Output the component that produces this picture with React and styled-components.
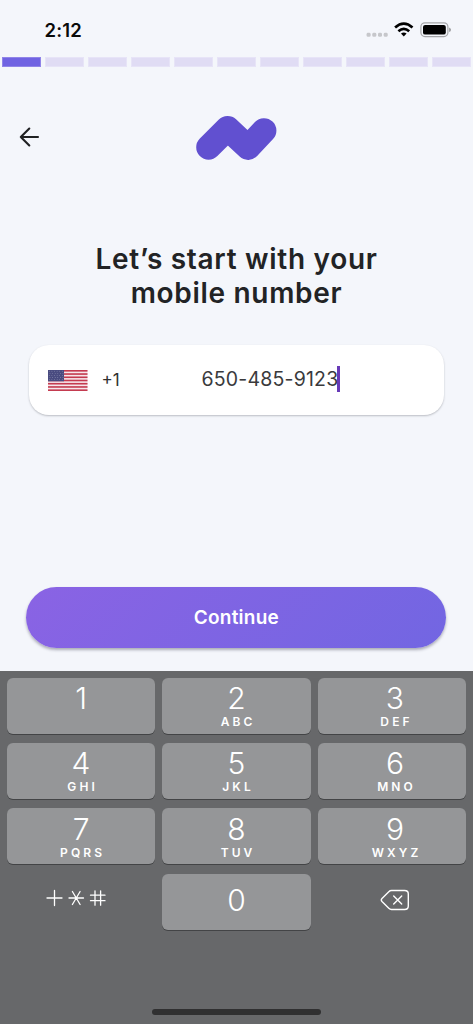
import React from "react";
import styled, { createGlobalStyle } from "styled-components";

const GlobalStyle = createGlobalStyle`
  * { box-sizing: border-box; }
  body { margin: 0; background: #f4f6fb; }
  button { border: 0; padding: 0; font: inherit; background: none; }
`;

const Screen = styled.main`
  width: 473px;
  height: 1024px;
  display: flex;
  flex-direction: column;
  overflow: hidden;
  background: #f4f6fb;
  color: #212224;
  font-family: Inter, "Liberation Sans", sans-serif;
`;

const StatusBar = styled.header`
  height: 57px;
  flex: none;
  display: flex;
  justify-content: space-between;
  padding: 19px 20px 0 44.5px;
`;

const Time = styled.span`
  font-size: 18.5px;
  line-height: 22px;
  font-weight: 600;
  letter-spacing: 0.2px;
  color: #0a0a0a;
`;

const StatusIcons = styled.svg`
  width: 88px;
  height: 22px;
`;

const Progress = styled.div`
  display: grid;
  grid-template-columns: repeat(11, 1fr);
  gap: 4.2px;
  padding: 0 2px;
  height: 10px;
  flex: none;
`;

const Step = styled.span`
  background: ${(p) => (p.$active ? "#7063e2" : "#e0dcf4")};
  border: 1px solid ${(p) => (p.$active ? "#9084e8" : "#e7e4f7")};
`;

const NavBar = styled.nav`
  display: grid;
  grid-template-columns: 1fr 82px 1fr;
  align-items: center;
  height: 46px;
  margin-top: 48px;
  padding: 0 19px 0 18px;
  flex: none;
`;

const BackIcon = styled.svg`
  display: block;
  width: 22px;
  height: 22px;
  margin-bottom: 2px;
`;

const Logo = styled.svg`
  display: block;
  width: 82px;
  height: 46px;
`;

const Title = styled.h1`
  margin: 81px 0 0;
  text-align: center;
  font-weight: 600;
  font-size: 28px;
  line-height: 34px;
  letter-spacing: 0.7px;
  color: #222325;
`;

const PhoneField = styled.div`
  display: flex;
  align-items: center;
  flex: none;
  height: 70px;
  margin: 35px 29px 0;
  padding-left: 19px;
  border-radius: 20px;
  background: #fff;
  box-shadow: 0 1px 2px rgba(40, 42, 55, 0.28);
`;

const Flag = styled.svg`
  display: block;
  width: 40px;
  height: 21px;
`;

const DialCode = styled.span`
  width: 100px;
  margin-left: 13.4px;
  font-size: 17px;
  color: #303030;
`;

const PhoneNumber = styled.span`
  font-size: 19.5px;
  line-height: 25px;
  letter-spacing: 0.2px;
  color: #3a3a3c;
  margin-top: -2px;
`;

const Caret = styled.span`
  width: 3px;
  height: 26px;
  margin: -2px 0 0 -1.2px;
  background: #673ab7;
`;

const ContinueButton = styled.button`
  flex: none;
  width: 420px;
  height: 61px;
  margin: 172px 0 0 26.4px;
  border-radius: 31px;
  background: linear-gradient(135deg, #8a63e4, #7266e2);
  box-shadow: 0 2px 3px rgba(40, 40, 60, 0.36);
  color: #fff;
  font-size: 19px;
  font-weight: 600;
  letter-spacing: 0.25px;
`;

const Keyboard = styled.section`
  flex: 1;
  margin-top: 23px;
  padding: 7px 7px 9px;
  display: flex;
  flex-direction: column;
  justify-content: space-between;
  align-items: center;
  background: #67686a;
`;

const Keys = styled.div`
  width: 100%;
  display: grid;
  grid-template-columns: repeat(3, 1fr);
  grid-auto-rows: 56px;
  gap: 9.2px 7.4px;
`;

const Key = styled.button`
  display: flex;
  flex-direction: column;
  align-items: center;
  justify-content: ${(p) => (p.$centered ? "center" : "flex-start")};
  padding-top: ${(p) => (p.$centered ? 0 : "3px")};
  padding-bottom: ${(p) => (p.$centered ? "3px" : 0)};
  border-radius: 6px;
  color: #fff;
  background: ${(p) => (p.$plain ? "none" : "#959698")};
  box-shadow: ${(p) => (p.$plain ? "none" : "0 1px 0.5px #434446")};

  &:nth-child(3n) {
    padding-left: 6px;
  }

  &:nth-child(n + 7):nth-child(-n + 9) {
    padding-top: 4px;
  }
`;

const Digit = styled.span`
  font-size: 30px;
  line-height: 34px;
  font-weight: 340;
`;

const Letters = styled.span`
  font-size: 12px;
  line-height: 13px;
  font-weight: 600;
  letter-spacing: 3.1px;
  margin-right: -3.1px;
`;

const KeyIcon = styled.svg`
  display: block;
  width: ${(p) => p.$width}px;
  height: 24px;
  margin-top: ${(p) => p.$shift || 0}px;
  margin-right: ${(p) => p.$inset || 0}px;
  fill: none;
  stroke: #fff;
  stroke-linecap: round;
  stroke-linejoin: round;
`;

const HomeIndicator = styled.span`
  width: 169px;
  height: 6px;
  border-radius: 3px;
  background: #303031;
`;

const keypad = [
  ["1", ""],
  ["2", "ABC"],
  ["3", "DEF"],
  ["4", "GHI"],
  ["5", "JKL"],
  ["6", "MNO"],
  ["7", "PQRS"],
  ["8", "TUV"],
  ["9", "WXYZ"],
];

function StatusGlyphs() {
  return (
    <StatusIcons viewBox="365 19 88 22">
      <g fill="#c6c7cb">
        {[366.6, 372.3, 378, 383.7].map((x) => (
          <rect key={x} x={x} y="32.8" width="4" height="4" rx="1.4" />
        ))}
      </g>
      <g fill="none" stroke="#000" strokeWidth="2.7">
        <path d="M395.1 27.5Q403.8 19.7 412.5 27.5" />
        <path d="M398.4 31.2Q403.8 26.7 409.2 31.2" />
      </g>
      <path d="M401 33.6Q403.8 31.6 406.6 33.6L403.8 36.6Z" fill="#000" />
      <rect x="420.9" y="22.8" width="27" height="13.8" rx="4" fill="none" stroke="#a4a5a8" strokeWidth="1.2" />
      <rect x="423" y="24.9" width="22.8" height="9.7" rx="2.2" fill="#000" />
      <path d="M449.2 27.5Q450.9 28.2 450.9 29.8T449.2 32.1Z" fill="#929396" />
    </StatusIcons>
  );
}

function UsFlag() {
  const stripes = [0, 1, 2, 3, 4, 5, 6];
  return (
    <Flag viewBox="0 0 40 21">
      <rect width="39.5" height="21" fill="#f6e7eb" />
      {stripes.map((i) => (
        <rect key={i} y={i * 3.23} width="39.5" height="1.62" fill="#c43b50" />
      ))}
      <rect width="16" height="11.3" fill="#494b80" />
      <g fill="#a6a7c2">
        {[1.2, 3.3, 5.4, 7.5, 9.6].map((y, row) =>
          [1.3, 3.9, 6.5, 9.1, 11.7, 14.3].map((x) => (
            <circle key={`${x}-${y}`} cx={x + (row % 2) * 0.7} cy={y} r="0.42" />
          ))
        )}
      </g>
    </Flag>
  );
}

export default function App() {
  return (
    <>
      <GlobalStyle />
      <Screen>
        <StatusBar>
          <Time>2:12</Time>
          <StatusGlyphs />
        </StatusBar>
        <Progress>
          {Array.from({ length: 11 }, (_, i) => (
            <Step key={i} $active={i === 0} />
          ))}
        </Progress>
        <NavBar>
          <BackIcon viewBox="18 126 22 22" fill="none" stroke="#202123" strokeWidth="2.1" strokeLinecap="round" strokeLinejoin="round">
            <path d="M38 137H20.8M29.3 128.6L20.8 137L29.3 145.4" />
          </BackIcon>
          <Logo viewBox="195 115 82 46">
            <path d="M208.6 147.3L227.6 128.4L248.1 147.5L264 130.6" fill="none" stroke="#6150d0" strokeWidth="24.8" strokeLinecap="round" strokeLinejoin="round" />
          </Logo>
        </NavBar>
        <Title>
          Let’s start with your
          <br />
          mobile number
        </Title>
        <PhoneField>
          <UsFlag />
          <DialCode>+1</DialCode>
          <PhoneNumber>650-485-9123</PhoneNumber>
          <Caret />
        </PhoneField>
        <ContinueButton>Continue</ContinueButton>
        <Keyboard>
          <Keys>
            {keypad.map(([digit, letters]) => (
              <Key key={digit}>
                <Digit>{digit}</Digit>
                <Letters>{letters}</Letters>
              </Key>
            ))}
            <Key $plain $centered>
              <KeyIcon $width={62} $shift={-4} $inset={10} viewBox="0 0 62 24" strokeWidth="1.3">
                <path d="M2 12H17M9.5 4.5V19.5" />
                <path d="M24 12H38.5M27.4 5.5L35.1 18.5M35.1 5.5L27.4 18.5" />
                <path d="M45.5 9.2H60M45.5 14.7H60M50 4.8V19.2M55.6 4.8V19.2" />
              </KeyIcon>
            </Key>
            <Key $centered>
              <Digit>0</Digit>
            </Key>
            <Key $plain $centered>
              <KeyIcon $width={30} viewBox="0 0 30 24" strokeWidth="1.4">
                <path d="M11.5 2.5H24.6Q28.3 2.5 28.3 6V18Q28.3 21.5 24.6 21.5H11.5Q10 21.5 8.8 20.3L2 13.5Q.6 12 2 10.5L8.8 3.7Q10 2.5 11.5 2.5Z" />
                <path d="M13.7 8.1L21.7 16.1M21.7 8.1L13.7 16.1" />
              </KeyIcon>
            </Key>
          </Keys>
          <HomeIndicator />
        </Keyboard>
      </Screen>
    </>
  );
}
